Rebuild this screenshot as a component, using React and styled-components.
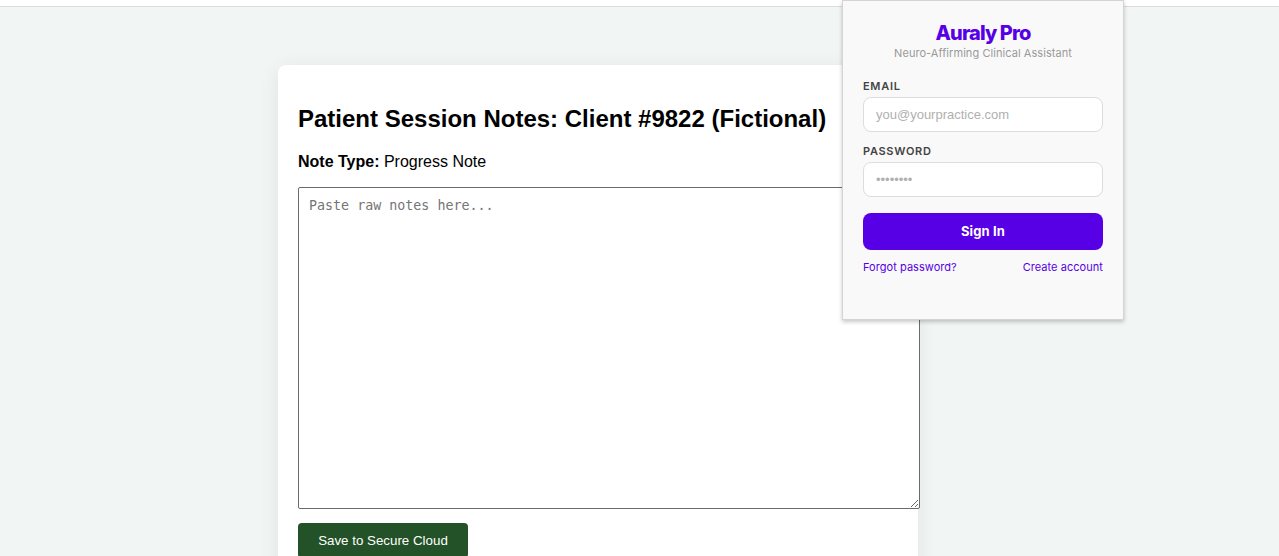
import React, { useState } from "react";
import styled, { createGlobalStyle } from "styled-components";

const GlobalStyle = createGlobalStyle`
    html,
    body {
        margin: 0;
        height: 556px;
        overflow: hidden;
        background: #f1f5f4;
    }

    body {
        font-family: "Liberation Sans", Helvetica, Arial, sans-serif;
        font-size: 16px;
        color: #000;
    }
`;

const Page = styled.div`
    height: 556px;
    overflow: hidden;
`;

const TopBar = styled.div`
    height: 6px;
    background: #fff;
    border-bottom: 1px solid #d9dcdb;
`;

const NoteCard = styled.main`
    box-sizing: border-box;
    width: 640px;
    height: 560px;
    margin: 58px 0 0 278px;
    padding: 40px 20px 20px;
    background: #fff;
    border-radius: 8px;
    box-shadow: 0 4px 20px rgba(0, 0, 0, 0.08);
`;

const NoteTitle = styled.h2`
    margin: 0;
    font-size: 24px;
    line-height: 27px;
    white-space: nowrap;
`;

const NoteType = styled.p`
    margin: 20px 0 16px;
    line-height: 19px;
`;

const NoteInput = styled.textarea`
    display: block;
    width: 600px;
    height: 300px;
    margin: 0;
    padding: 10px;
    border: 1px solid #6b6b6b;
    border-radius: 2px;
    background: #fff;
    font-family: "DejaVu Sans Mono", monospace;
    font-size: 13.333px;
    line-height: 16px;

    &::placeholder {
        color: #757575;
    }
`;

const SaveButton = styled.button`
    width: 170px;
    height: 35px;
    margin-top: 14px;
    padding: 0;
    border: none;
    border-radius: 4px;
    background: #235128;
    color: #fff;
    font-family: "Liberation Sans", Arial, sans-serif;
    font-size: 13.333px;
    cursor: pointer;
`;

const Popup = styled.aside`
    position: absolute;
    top: 0;
    left: 842px;
    box-sizing: border-box;
    width: 282px;
    height: 320px;
    padding: 20px;
    background: #f9f9f9;
    border: 1px solid #d3d5d4;
    box-shadow: 0 2px 4px rgba(0, 0, 0, 0.22);
    font-family: Inter, sans-serif;
`;

const Brand = styled.h1`
    margin: 0;
    color: #5700e6;
    font-size: 20px;
    font-weight: 800;
    line-height: 24px;
    letter-spacing: -0.9px;
    text-align: center;
`;

const Tagline = styled.div`
    margin-bottom: 18px;
    color: #999;
    font-size: 11px;
    line-height: 17px;
    letter-spacing: 0.06px;
    text-align: center;
`;

const Field = styled.label`
    display: block;
    margin-bottom: ${(props) => props.$gap}px;
`;

const FieldLabel = styled.span`
    display: block;
    margin-bottom: 4px;
    color: #444;
    font-size: 11px;
    font-weight: 600;
    line-height: 13px;
    letter-spacing: 0.7px;
    text-transform: uppercase;
`;

const FieldInput = styled.input`
    display: block;
    box-sizing: border-box;
    width: 240px;
    height: 35px;
    padding: 0 12px;
    border: 1px solid #ddd;
    border-radius: 8px;
    background: #fff;
    font-family: "Liberation Sans", Arial, sans-serif;
    font-size: 13px;

    &::placeholder {
        color: #b0b0b0;
    }
`;

const SignInButton = styled.button`
    display: block;
    width: 240px;
    height: 37px;
    padding: 0 0 1px;
    border: none;
    border-radius: 8px;
    background: #5700e6;
    color: #fff;
    font-family: Inter, sans-serif;
    font-size: 13px;
    font-weight: 700;
    letter-spacing: 0.15px;
    cursor: pointer;
`;

const LinkRow = styled.div`
    display: flex;
    justify-content: space-between;
    margin-top: 11px;
`;

const TextLink = styled.a`
    color: #5700e6;
    font-size: 11px;
    line-height: 13px;
    letter-spacing: 0.05px;
    text-decoration: none;
    cursor: pointer;
`;

function SignInPopup() {
    const [values, setValues] = useState({
        email: '',
        password: '',
    });

    const handleInputOnChange = (e) => {
        setValues({
            ...values,
            [e.target.name]: e.target.value,
        })
    }

    const handleSubmit = (e) => {
        e.preventDefault();
    }

    return (
        <Popup>
            <Brand>Auraly Pro</Brand>
            <Tagline>Neuro-Affirming Clinical Assistant</Tagline>
            <form onSubmit={handleSubmit}>
                <Field $gap={13}>
                    <FieldLabel>Email</FieldLabel>
                    <FieldInput
                        type={'email'}
                        name={'email'}
                        placeholder={'you@yourpractice.com'}
                        value={values.email}
                        onChange={handleInputOnChange}
                    />
                </Field>
                <Field $gap={16}>
                    <FieldLabel>Password</FieldLabel>
                    <FieldInput
                        type={'password'}
                        name={'password'}
                        placeholder={'••••••••'}
                        value={values.password}
                        onChange={handleInputOnChange}
                    />
                </Field>
                <SignInButton>Sign In</SignInButton>
            </form>
            <LinkRow>
                <TextLink>Forgot password?</TextLink>
                <TextLink>Create account</TextLink>
            </LinkRow>
        </Popup>
    )
}

function App() {
    const [note, setNote] = useState('');

    return (
        <Page>
            <GlobalStyle />
            <TopBar />
            <NoteCard>
                <NoteTitle>Patient Session Notes: Client #9822 (Fictional)</NoteTitle>
                <NoteType><strong>Note Type:</strong> Progress Note</NoteType>
                <NoteInput
                    placeholder={'Paste raw notes here...'}
                    value={note}
                    onChange={(e) => setNote(e.target.value)}
                />
                <SaveButton>Save to Secure Cloud</SaveButton>
            </NoteCard>
            <SignInPopup />
        </Page>
    )
}

export default App;
